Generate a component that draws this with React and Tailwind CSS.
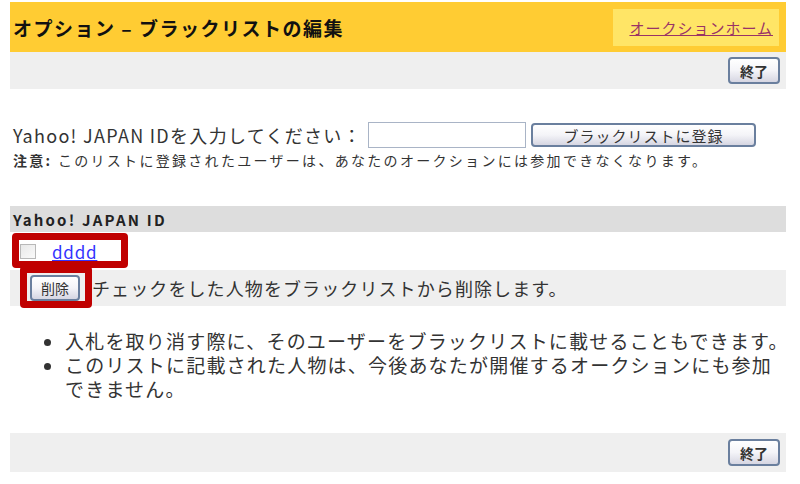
import React from "react";

const font = { fontFamily: '"Noto Sans CJK JP", "Noto Sans", sans-serif' };

function OldButton({ children, className = "" }) {
  return (
    <button
      className={`flex items-center justify-center rounded-[4px] border-2 border-[#6a7f9e] bg-gradient-to-b from-white via-[#f4f4f8] to-[#d6d6e2] text-[#333] leading-none ${className}`}
    >
      {children}
    </button>
  );
}

export default function App() {
  return (
    <div className="relative h-[484px] w-[800px] bg-white text-[#333]" style={font}>
      <div className="ml-[10px] w-[776px] pt-[2px]">
        {/* title bar */}
        <div className="flex h-[50px] items-center justify-between bg-[#FFCC33] pl-[3px] pr-[7px]">
          <h1 className="text-[19px] font-bold leading-none tracking-[1.5px] text-[#111]">
            オプション – ブラックリストの編集
          </h1>
          <div className="flex h-[37px] w-[166px] items-center justify-end bg-[#FFE566] pr-[6px]">
            <a href="#" className="text-[15px] leading-none tracking-[1px] text-[#993366] underline">
              オークションホーム
            </a>
          </div>
        </div>

        <div className="flex h-[37px] items-center justify-end bg-[#EFEFEF] pr-[6px]">
          <OldButton className="h-[27px] w-[52px] text-[14px] font-bold">終了</OldButton>
        </div>

        {/* entry form */}
        <div className="mt-[33px] pl-[3px]">
          <div className="flex items-center">
            <span className="text-[18px] leading-none tracking-[1.3px]">Yahoo! JAPAN IDを入力してください：</span>
            <input
              type="text"
              className="ml-[6px] h-[26px] w-[158px] border border-[#a9b4c6] bg-white"
            />
            <OldButton className="ml-[5px] h-[24px] w-[225px] text-[15px] tracking-[1px]">ブラックリストに登録</OldButton>
          </div>
          <p className="mt-[4px] whitespace-nowrap text-[14px] leading-[16px] tracking-[2.3px]">
            <span className="font-bold">注意:</span> このリストに登録されたユーザーは、あなたのオークションには参加できなくなります。
          </p>
        </div>

        {/* list */}
        <div className="mt-[38px] flex h-[26px] items-center bg-[#DDDDDD] pl-[3px]">
          <span className="text-[15px] font-bold leading-none tracking-[2.2px] text-[#222]">Yahoo! JAPAN ID</span>
        </div>
        <div className="flex h-[38px] items-center pl-[10px]">
          <span className="h-[15px] w-[16px] border border-[#b8b8b8] bg-gradient-to-br from-[#e8e8e8] to-[#fafafa]" />
          <a href="#" className="ml-[16px] text-[17px] leading-none tracking-[0.8px] text-[#3333FF] underline">
            dddd
          </a>
        </div>
        <div className="flex h-[36px] items-center bg-[#EFEFEF] pl-[20px]">
          <OldButton className="h-[26px] w-[50px] text-[14px]">削除</OldButton>
          <span className="ml-[12px] text-[18px] leading-none tracking-[1.1px]">チェックをした人物をブラックリストから削除します。</span>
        </div>

        <ul className="mt-[23px] list-disc whitespace-nowrap pl-[55px] text-[19px] leading-[24px] tracking-[1.2px]">
          <li>入札を取り消す際に、そのユーザーをブラックリストに載せることもできます。</li>
          <li>
            このリストに記載された人物は、今後あなたが開催するオークションにも参加
            <br />
            できません。
          </li>
        </ul>

        <div className="mt-[32px] flex h-[39px] items-center justify-end bg-[#EFEFEF] pr-[6px]">
          <OldButton className="h-[27px] w-[52px] text-[14px] font-bold">終了</OldButton>
        </div>
      </div>

      {/* red annotation frames */}
      <div className="absolute left-[12px] top-[233px] h-[35px] w-[116px] rounded-[4px] border-[7px] border-[#C00000]" />
      <div className="absolute left-[20px] top-[266px] h-[42px] w-[72px] rounded-[4px] border-[7px] border-[#C00000]" />
    </div>
  );
}
